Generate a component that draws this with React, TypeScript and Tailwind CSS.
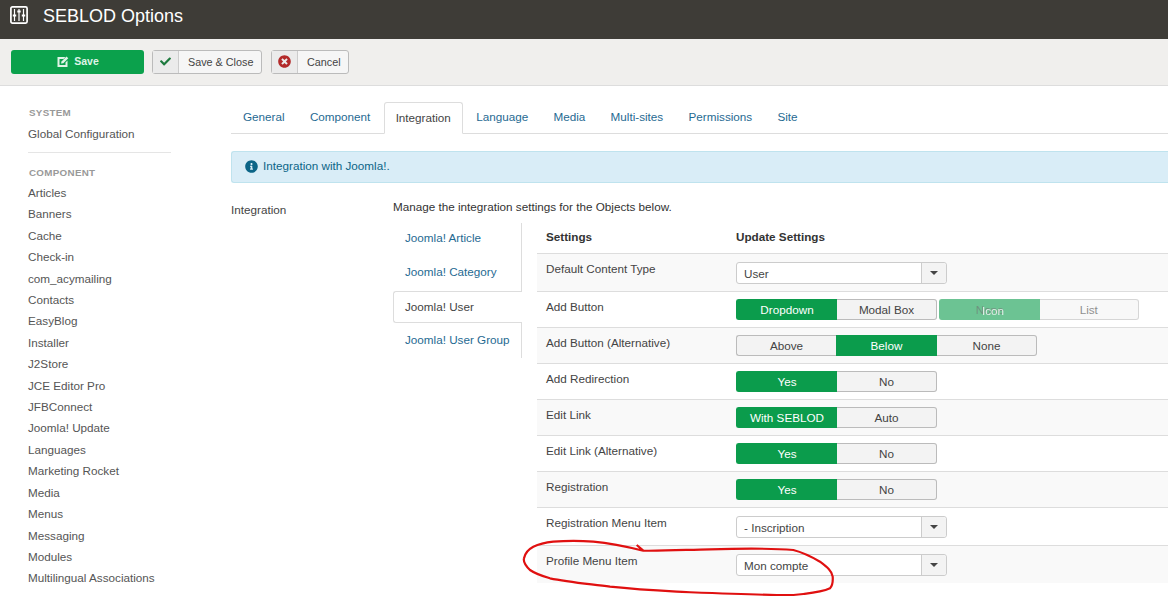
import { FaCheck, FaInfoCircle, FaTimesCircle } from 'react-icons/fa';

const components = [
    'Articles', 'Banners', 'Cache', 'Check-in', 'com_acymailing', 'Contacts', 'EasyBlog', 'Installer', 'J2Store',
    'JCE Editor Pro', 'JFBConnect', 'Joomla! Update', 'Languages', 'Marketing Rocket', 'Media', 'Menus',
    'Messaging', 'Modules', 'Multilingual Associations',
];

const tabs = ['General', 'Component', 'Integration', 'Language', 'Media', 'Multi-sites', 'Permissions', 'Site'];

function SelectBox({ value }: { value: string }) {
    return (
        <div className="flex h-[22px] w-[211px] rounded-[3px] border border-[#ccc] bg-white">
            <div className="flex-1 pl-[7px] leading-[21px] text-[#444]">{value}</div>
            <div className="flex w-[25px] items-center justify-center rounded-r-[3px] border-l border-[#ccc] bg-[#f3f3f3]">
                <div className="h-0 w-0 border-x-[4px] border-t-[4px] border-x-transparent border-t-[#444]" />
            </div>
        </div>
    );
}

function Segments({ items, active, width = 100, dim }: { items: string[]; active: number; width?: number; dim?: boolean }) {
    return (
        <div className="flex h-[21px]">
            {items.map((item, i) => (
                <div
                    key={item}
                    style={{ width: i === active ? width + 1 : width }}
                    className={
                        'flex items-center justify-center border-y ' +
                        (i === 0 ? 'rounded-l-[3px] border-l ' : '') +
                        (i === items.length - 1 ? 'rounded-r-[3px] border-r ' : '') +
                        (i === active
                            ? 'border-[#0b9c4c] bg-[#0b9c4c] ' + (dim ? 'text-[#0f4d2a]' : 'text-white')
                            : 'border-[#bbb] bg-[#f3f3f3] text-[#444] ') +
                        (i !== active && i !== 0 && i !== items.length - 1 ? 'border-r' : '')
                    }
                >
                    {item}
                </div>
            ))}
        </div>
    );
}

function Row({ label, gray, tall, children }: { label: string; gray?: boolean; tall?: boolean; children: React.ReactNode }) {
    return (
        <div className={'flex border-t border-[#ddd] ' + (gray ? 'bg-[#f9f9f9] ' : 'bg-white ') + (tall ? 'h-[38px]' : 'h-[36px]')}>
            <div className="w-[199px] pl-[9px] pt-[6px] leading-[18px] text-[#444]">{label}</div>
            <div className={tall ? 'pt-[8px]' : 'pt-[7px]'}>{children}</div>
        </div>
    );
}

export default function App() {
    return (
        <div className="relative h-[596px] w-[1168px] overflow-hidden bg-white font-['Liberation_Sans',Arial,sans-serif] text-[11.7px]">
            <header className="flex h-[39px] items-center bg-[#3e3c37] pl-[10px] text-white">
                <svg width="18" height="18" viewBox="0 0 18 18" fill="none" stroke="#fff" className="mb-[9px]">
                    <rect x="0.9" y="0.9" width="16.2" height="16.2" rx="1.5" strokeWidth="1.7" />
                    <path d="M4.5 3v12M9 3v12M13.5 3v12" strokeWidth="1.2" />
                    <path d="M2.8 9.5h3.4M7.3 5.5h3.4M11.8 9.5h3.4" strokeWidth="2.2" />
                </svg>
                <h1 className="mb-[7px] ml-[15px] text-[18px] leading-none">SEBLOD Options</h1>
            </header>

            <div className="flex h-[47px] items-center border-b border-[#ddd] bg-[#f0efed] pb-[1px] pl-[11px]">
                <button className="flex h-[24px] w-[133px] items-center justify-center gap-[5px] rounded-[3px] bg-[#0ba14c] pl-[1px] text-[10.5px] font-bold text-[#dff3e6]">
                    <svg width="12" height="11" viewBox="0 0 12 11">
                        <path d="M0.5 1h8L6.5 3H2.5v6h6V6.5l2-2V11H0.5z" fill="#dff3e6" />
                        <path d="M4 7.5l0.5-2L9.5 0.5l1.8 1.8-5 5z" fill="#dff3e6" />
                    </svg>
                    <span className="mt-[1px]">Save</span>
                </button>
                <button className="ml-[8px] flex h-[24px] w-[110px] items-center rounded-[3px] border border-[#bbb] bg-[#f6f6f6] text-[10.8px] text-[#444]">
                    <span className="flex h-full w-[26px] items-center justify-center border-r border-[#ccc] bg-[#ebebeb] text-[#1d7a3e]">
                        <FaCheck size={11} />
                    </span>
                    <span className="ml-[9px] mt-[1px]">Save &amp; Close</span>
                </button>
                <button className="ml-[9px] flex h-[24px] w-[78px] items-center rounded-[3px] border border-[#bbb] bg-[#f6f6f6] text-[10.8px] text-[#444]">
                    <span className="flex h-full w-[26px] items-center justify-center border-r border-[#ccc] bg-[#ebebeb] text-[#b32a2a]">
                        <FaTimesCircle size={13} />
                    </span>
                    <span className="ml-[9px] mt-[1px]">Cancel</span>
                </button>
            </div>

            <div className="flex">
                <aside className="w-[231px] shrink-0 pl-[28px] pt-[20px]">
                    <div className="w-[143px]">
                        <div className="pl-[1px] text-[9.8px] font-bold leading-[13px] tracking-[0.3px] text-[#999]">SYSTEM</div>
                        <div className="mt-[5px] leading-[20px] text-[#555]">Global Configuration</div>
                        <div className="mt-[8px] border-t border-[#e5e5e5]" />
                        <div className="mt-[13px] pl-[1px] text-[9.8px] font-bold leading-[14px] tracking-[0.3px] text-[#999]">COMPONENT</div>
                    </div>
                    <ul className="mt-[2px] text-[#555]">
                        {components.map((name) => (
                            <li key={name} className="h-[21.42px] whitespace-nowrap leading-[21.42px]">{name}</li>
                        ))}
                    </ul>
                </aside>

                <main className="min-w-0 flex-1 pt-[16px]">
                    <div className="flex h-[32px] border-b border-[#ddd]">
                        {tabs.map((tab) => (
                            <div
                                key={tab}
                                className={
                                    'mr-[1.3px] h-[32px] leading-[29px] ' +
                                    (tab === 'Integration'
                                        ? 'rounded-t-[3px] border border-[#ddd] border-b-white bg-white px-[11px] text-[#444]'
                                        : 'px-[12px] text-[#1f6a92]')
                                }
                            >
                                {tab}
                            </div>
                        ))}
                    </div>

                    <div className="mt-[17px] flex h-[32px] items-center gap-[5px] rounded-l-[3px] border border-r-0 border-[#bfe3ee] bg-[#d9edf7] pb-[2px] pl-[13px] text-[#0c6587]">
                        <FaInfoCircle size={13} />
                        <span>Integration with Joomla!.</span>
                    </div>

                    <div className="mt-[15px] flex">
                        <div className="w-[162px] pt-[3px] leading-[18px] text-[#444]">Integration</div>
                        <div className="min-w-0 flex-1">
                            <div className="h-[18px] leading-[17px] text-[#333]">Manage the integration settings for the Objects below.</div>
                            <div className="mt-[7px] flex">
                                <div className="w-[129px] shrink-0">
                                    <div className="h-[34px] border-r border-[#ddd] pl-[12px] leading-[29px] text-[#1f6a92]">Joomla! Article</div>
                                    <div className="h-[34px] border-r border-[#ddd] pl-[12px] leading-[29px] text-[#1f6a92]">Joomla! Category</div>
                                    <div className="h-[32px] rounded-l-[3px] border border-r-0 border-[#ddd] pl-[11px] leading-[29px] text-[#444]">Joomla! User</div>
                                    <div className="h-[35px] border-r border-[#ddd] pl-[12px] leading-[34px] text-[#1f6a92]">Joomla! User Group</div>
                                </div>
                                <div className="ml-[15px] min-w-0 flex-1">
                                    <div className="flex h-[30px] font-bold text-[#333]">
                                        <div className="w-[199px] pl-[9px] pt-[5px] leading-[18px]">Settings</div>
                                        <div className="pt-[5px] leading-[18px]">Update Settings</div>
                                    </div>
                                    <Row label="Default Content Type" gray tall><SelectBox value="User" /></Row>
                                    <Row label="Add Button">
                                        <div className="flex">
                                            <Segments items={['Dropdown', 'Modal Box']} active={0} />
                                            <div className="relative ml-[2px] opacity-60">
                                                <Segments items={['None', 'List']} active={0} width={99.5} dim />
                                                <span className="absolute left-[43px] top-[3px] text-white opacity-80">Icon</span>
                                            </div>
                                        </div>
                                    </Row>
                                    <Row label="Add Button (Alternative)" gray><Segments items={['Above', 'Below', 'None']} active={1} /></Row>
                                    <Row label="Add Redirection"><Segments items={['Yes', 'No']} active={0} /></Row>
                                    <Row label="Edit Link" gray><Segments items={['With SEBLOD', 'Auto']} active={0} /></Row>
                                    <Row label="Edit Link (Alternative)"><Segments items={['Yes', 'No']} active={0} /></Row>
                                    <Row label="Registration" gray><Segments items={['Yes', 'No']} active={0} /></Row>
                                    <Row label="Registration Menu Item" tall><SelectBox value="- Inscription" /></Row>
                                    <Row label="Profile Menu Item" gray tall><SelectBox value="Mon compte" /></Row>
                                </div>
                            </div>
                        </div>
                    </div>
                </main>
            </div>

            {/* hand drawn circle on top of the screenshot */}
            <svg className="pointer-events-none absolute left-0 top-0" width="1168" height="596" fill="none">
                <path
                    d="M636.7 545 L643.3 550.7 C670 551 690 549.5 710 549.3 C740 548.5 770 548 793.3 550 C805 553 812 557 820 561.7 C827 567 832 571 832.7 576.7 C833 581 833 585 830 588.3 C822 592 812 593 803.3 594 C795 595 786 595.5 776.7 595 C745 594.5 710 593 676.7 591.7 C655 590.5 632 589 610 586.7 C590 584 568 582 550 578.3 C542 576 535 573.5 530 570 C526 566 523 562 524 558.3 C525 553 529 549 533.3 546.7 C539 544 546 542.5 553.3 541.7 C567 540.5 580 540.5 593.3 541.7 C612 543.5 628 547 643.3 550.7"
                    stroke="#e01010"
                    strokeWidth="2.2"
                />
            </svg>
        </div>
    );
}
